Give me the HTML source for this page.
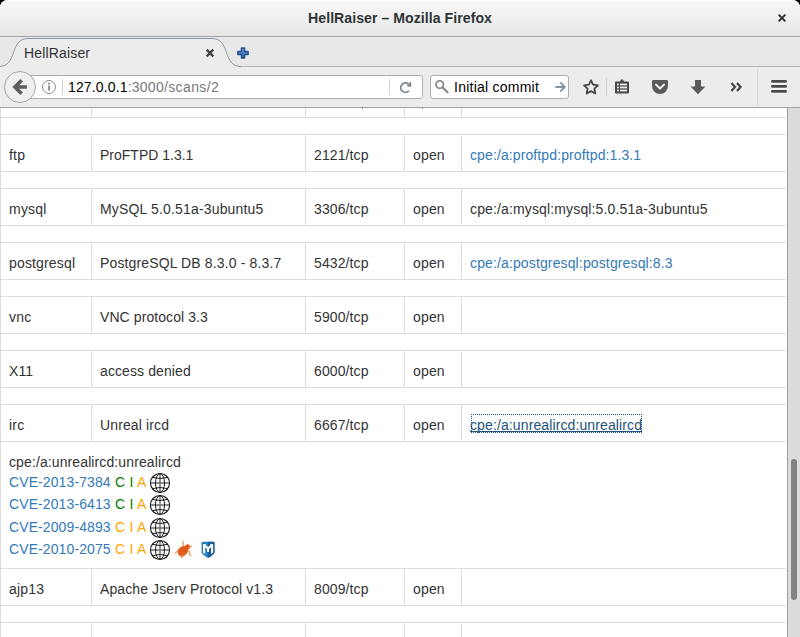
<!DOCTYPE html>
<html>
<head>
<meta charset="utf-8">
<title>HellRaiser</title>
<style>
html,body{margin:0;padding:0;}
body{width:800px;height:637px;overflow:hidden;background:#000;position:relative;font-family:"Liberation Sans",sans-serif;font-size:14px;color:#333;}
.abs{position:absolute;}
#win{position:absolute;left:0;top:0;width:800px;height:637px;overflow:hidden;border-radius:7.5px 7.5px 0 0;background:#fff;}
/* title bar */
#title{position:absolute;left:0;top:0;width:800px;height:36px;background:linear-gradient(#f7f7f7,#f2f2f2 40%,#e7e7e7);border-top:1px solid #fdfdfd;box-sizing:border-box;}
#titleb{position:absolute;left:0;top:36px;width:800px;height:1px;background:#a3a3a3;}
#ttext{position:absolute;left:0;top:8px;width:800px;text-align:center;font-weight:bold;font-size:14.1px;line-height:20px;color:#2e3436;letter-spacing:0.05px;}
/* tab bar */
#tabbar{position:absolute;left:0;top:37px;width:800px;height:30px;background:#e8e8e8;}
#nav{position:absolute;left:0;top:67px;width:800px;height:40px;background:#ececec;}
#navb{position:absolute;left:0;top:107px;width:800px;height:1px;background:#a0a0a0;}
.chrome{font-size:14px;color:#000;white-space:nowrap;line-height:20px;}
/* page */
#page{position:absolute;left:0;top:108px;width:787px;height:529px;background:#fff;overflow:hidden;}
.h{position:absolute;left:0;width:786px;height:1px;background:#ddd;}
.v{position:absolute;width:1px;background:#ddd;}
.t{position:absolute;white-space:nowrap;line-height:20px;font-size:14px;color:#333;}
.l{color:#337ab7;}
.foc{color:#23527c;text-decoration:underline;text-decoration-skip-ink:none;text-underline-offset:1px;text-decoration-thickness:1px;}
.d{letter-spacing:0.1px;word-spacing:0.28px;}
.ic{display:inline-block;}
#sbar{position:absolute;left:787px;top:108px;width:13px;height:529px;background:#dcdcdc;border-left:1px solid #9e9e9e;box-sizing:border-box;}
#thumb{position:absolute;left:791px;top:459px;width:6px;height:141px;border-radius:3px;background:#808386;}
</style>
</head>
<body>
<div id="win">
  <div id="title"></div>
  <div id="ttext">HellRaiser – Mozilla Firefox</div>
  <svg class="abs" style="left:774px;top:10px" width="16" height="16" viewBox="0 0 16 16"><path d="M4.6 4.6 L11.4 11.4 M11.4 4.6 L4.6 11.4" stroke="#2e3436" stroke-width="2" fill="none"/></svg>
  <div id="titleb"></div>

  <div id="tabbar"></div>
  <svg class="abs" style="left:0;top:37px" width="800" height="31" viewBox="0 0 800 31">
    <path d="M-1 29.5 C 18 29.5, 9 1.5, 28 1.5 L 212 1.5 C 231 1.5, 222 29.5, 241 29.5 L 800 29.5 L 800 31 L -3 31 Z" fill="#ececec"/>
    <path d="M238 29.5 L 800 29.5" fill="none" stroke="#b4b4b4" stroke-width="1"/>
    <path d="M-1 29.5 C 18 29.5, 9 1.5, 28 1.5 L 212 1.5 C 231 1.5, 222 29.5, 241 29.5" fill="none" stroke="#8e9aa6" stroke-width="1"/>
  </svg>
  <div class="abs chrome" style="left:24px;top:43px;font-size:14px;letter-spacing:0.16px;color:#333;">HellRaiser</div>
  <svg class="abs" style="left:202px;top:45px" width="16" height="16" viewBox="0 0 16 16"><path d="M4.7 4.7 L11.3 11.3 M11.3 4.7 L4.7 11.3" stroke="#444" stroke-width="2.4" fill="none"/></svg>
  <svg class="abs" style="left:235px;top:45px" width="16" height="16" viewBox="0 0 16 16"><defs><linearGradient id="pg" x1="0" y1="0" x2="0" y2="1"><stop offset="0" stop-color="#6d9cd8"/><stop offset="1" stop-color="#3465a4"/></linearGradient></defs><path d="M6.45 2.90 L9.55 2.90 L9.55 6.45 L13.10 6.45 L13.10 9.55 L9.55 9.55 L9.55 13.10 L6.45 13.10 L6.45 9.55 L2.90 9.55 L2.90 6.45 L6.45 6.45 Z" fill="url(#pg)" stroke="#24508f" stroke-width="1.5" stroke-linejoin="round"/></svg>

  <div id="nav"></div>
  <div class="abs" style="left:242px;top:67px;width:558px;height:1px;background:#f1f1f1;"></div>
  <!-- url bar -->
  <div class="abs" style="left:20px;top:75px;width:403px;height:24px;box-sizing:border-box;border:1px solid #adadad;border-radius:0 3px 3px 0;background:#fff;"></div>
  <div class="abs" style="left:4px;top:71px;width:32px;height:32px;box-sizing:border-box;border:1px solid #a6a6a6;border-radius:50%;background:#efefef;"></div>
  <svg class="abs" style="left:4px;top:71px" width="32" height="32" viewBox="0 0 32 32"><path d="M22.9 16 H12.5 M17.6 9.3 L11 16 L17.6 22.7" stroke="#5e5e5e" stroke-width="3.7" fill="none" stroke-linejoin="miter"/></svg>
  <svg class="abs" style="left:40px;top:78px" width="18" height="18" viewBox="0 0 18 18"><circle cx="9" cy="9" r="6.5" fill="none" stroke="#8e8e8e" stroke-width="1"/><rect x="8.15" y="7.6" width="1.8" height="5" fill="#888"/><rect x="8.15" y="4.9" width="1.8" height="1.7" fill="#888"/></svg>
  <div class="abs" style="left:62px;top:79px;width:1px;height:16px;background:#d0d0d0;"></div>
  <div class="abs chrome" style="left:68px;top:77px;font-size:14px"><span style="color:#000;letter-spacing:0.15px">127.0.0.1</span><span style="color:#777;letter-spacing:0.22px">:3000</span><span style="color:#777;letter-spacing:0.4px">/scans/2</span></div>
  <div class="abs" style="left:389px;top:79px;width:1px;height:16px;background:#d0d0d0;"></div>
  <svg class="abs" style="left:397px;top:79px" width="16" height="16" viewBox="0 0 16 16"><path d="M11.6 5.2 A4.7 4.7 0 1 0 11.9 11.9" stroke="#7c8a98" stroke-width="1.9" fill="none"/><path d="M9.6 7.2 L14.2 2.2 L14.2 8 Z" fill="#7c8a98"/></svg>

  <!-- search -->
  <div class="abs" style="left:430px;top:75px;width:139px;height:24px;box-sizing:border-box;border:1px solid #adadad;border-radius:3px;background:#fff;"></div>
  <svg class="abs" style="left:433px;top:79px" width="16" height="16" viewBox="0 0 16 16"><circle cx="6.7" cy="5.6" r="3.7" fill="none" stroke="#8a8a8a" stroke-width="1.8"/><path d="M9.5 8.4 L14.5 13.3" stroke="#8a8a8a" stroke-width="2.3" stroke-linecap="round"/></svg>
  <div class="abs chrome" style="left:454px;top:77px;letter-spacing:0.24px;">Initial commit</div>
  <svg class="abs" style="left:553px;top:79px" width="16" height="16" viewBox="0 0 16 16"><path d="M2.4 8 H11.4 M7.2 3.4 L11.8 8 L7.2 12.6" stroke="#8494a3" stroke-width="1.8" fill="none"/></svg>

  <!-- toolbar icons -->
  <svg class="abs" style="left:582px;top:78px" width="18" height="18" viewBox="0 0 18 18"><path d="M9.00 2.30 L11.09 6.73 L15.94 7.34 L12.38 10.70 L13.29 15.51 L9.00 13.15 L4.71 15.51 L5.62 10.70 L2.06 7.34 L6.91 6.73 Z" fill="none" stroke="#474747" stroke-width="1.8" stroke-linejoin="round"/></svg>
  <div class="abs" style="left:606px;top:78px;width:1px;height:18px;background:#cfcfcf;"></div>
  <svg class="abs" style="left:614px;top:78px" width="16" height="17" viewBox="0 0 16 17"><path d="M8 1 L10.4 3.4 H14 Q15 3.4 15 4.4 V14.6 Q15 15.6 14 15.6 H2 Q1 15.6 1 14.6 V4.4 Q1 3.4 2 3.4 H5.6 Z" fill="#494949"/><rect x="3" y="5.6" width="1.8" height="1.8" fill="#ececec"/><rect x="6" y="5.6" width="7" height="1.8" fill="#ececec"/><rect x="3" y="8.6" width="1.8" height="1.8" fill="#ececec"/><rect x="6" y="8.6" width="7" height="1.8" fill="#ececec"/><rect x="3" y="11.6" width="1.8" height="1.8" fill="#ececec"/><rect x="6" y="11.6" width="7" height="1.8" fill="#ececec"/></svg>
  <svg class="abs" style="left:651px;top:79px" width="18" height="16" viewBox="0 0 18 16"><path d="M2.4 1 H15.6 Q17 1 17 2.4 V7 A8 8 0 0 1 1 7 V2.4 Q1 1 2.4 1 Z" fill="#5a5a5a"/><path d="M5 5.6 L9 9.4 L13 5.6" stroke="#f4f4f4" stroke-width="2" fill="none" stroke-linecap="round" stroke-linejoin="round"/></svg>
  <svg class="abs" style="left:690px;top:79px" width="16" height="16" viewBox="0 0 16 16"><path d="M5 1 H11 V7.4 H15.4 L8 15.2 L0.6 7.4 H5 Z" fill="#5a5a5a"/></svg>
  <svg class="abs" style="left:730px;top:82px" width="13" height="10" viewBox="0 0 13 10"><path d="M1.4 1 L5 5 L1.4 9 M7 1 L10.6 5 L7 9" stroke="#474747" stroke-width="2.2" fill="none"/></svg>
  <div class="abs" style="left:757px;top:69px;width:1px;height:37px;background:#d6d6d6;"></div>
  <svg class="abs" style="left:770px;top:79px" width="18" height="16" viewBox="0 0 18 16"><g stroke-linecap="round" stroke-width="2.8" fill="none"><path d="M2.4 3.4 H15.6 M2.4 8.4 H15.6 M2.4 13.4 H15.6" stroke="#fafafa"/><path d="M2.4 2.4 H15.6 M2.4 7.4 H15.6 M2.4 12.4 H15.6" stroke="#4a4a4a"/></g></svg>
  <div id="navb"></div>

  <!-- PAGE -->
  <div id="page">
    <!--GEN-->
    <div class="v" style="left:0;top:0;height:529px"></div>
    <div class="h" style="top:9px"></div>
    <div class="h" style="top:26px"></div>
    <div class="h" style="top:63px"></div>
    <div class="h" style="top:80px"></div>
    <div class="h" style="top:117px"></div>
    <div class="h" style="top:134px"></div>
    <div class="h" style="top:171px"></div>
    <div class="h" style="top:188px"></div>
    <div class="h" style="top:225px"></div>
    <div class="h" style="top:242px"></div>
    <div class="h" style="top:279px"></div>
    <div class="h" style="top:296px"></div>
    <div class="h" style="top:333px"></div>
    <div class="h" style="top:460px"></div>
    <div class="h" style="top:497px"></div>
    <div class="h" style="top:514px"></div>
    <div class="v" style="left:91px;top:0px;height:9px"></div>
    <div class="v" style="left:305px;top:0px;height:9px"></div>
    <div class="v" style="left:404px;top:0px;height:9px"></div>
    <div class="v" style="left:461px;top:0px;height:9px"></div>
    <div class="v" style="left:91px;top:27px;height:36px"></div>
    <div class="v" style="left:305px;top:27px;height:36px"></div>
    <div class="v" style="left:404px;top:27px;height:36px"></div>
    <div class="v" style="left:461px;top:27px;height:36px"></div>
    <div class="v" style="left:91px;top:81px;height:36px"></div>
    <div class="v" style="left:305px;top:81px;height:36px"></div>
    <div class="v" style="left:404px;top:81px;height:36px"></div>
    <div class="v" style="left:461px;top:81px;height:36px"></div>
    <div class="v" style="left:91px;top:135px;height:36px"></div>
    <div class="v" style="left:305px;top:135px;height:36px"></div>
    <div class="v" style="left:404px;top:135px;height:36px"></div>
    <div class="v" style="left:461px;top:135px;height:36px"></div>
    <div class="v" style="left:91px;top:189px;height:36px"></div>
    <div class="v" style="left:305px;top:189px;height:36px"></div>
    <div class="v" style="left:404px;top:189px;height:36px"></div>
    <div class="v" style="left:461px;top:189px;height:36px"></div>
    <div class="v" style="left:91px;top:243px;height:36px"></div>
    <div class="v" style="left:305px;top:243px;height:36px"></div>
    <div class="v" style="left:404px;top:243px;height:36px"></div>
    <div class="v" style="left:461px;top:243px;height:36px"></div>
    <div class="v" style="left:91px;top:297px;height:36px"></div>
    <div class="v" style="left:305px;top:297px;height:36px"></div>
    <div class="v" style="left:404px;top:297px;height:36px"></div>
    <div class="v" style="left:461px;top:297px;height:36px"></div>
    <div class="v" style="left:91px;top:461px;height:36px"></div>
    <div class="v" style="left:305px;top:461px;height:36px"></div>
    <div class="v" style="left:404px;top:461px;height:36px"></div>
    <div class="v" style="left:461px;top:461px;height:36px"></div>
    <div class="v" style="left:91px;top:515px;height:14px"></div>
    <div class="v" style="left:305px;top:515px;height:14px"></div>
    <div class="v" style="left:404px;top:515px;height:14px"></div>
    <div class="v" style="left:461px;top:515px;height:14px"></div>
    <div class="t" style="left:9px;top:37px;letter-spacing:0.200px">ftp</div>
    <div class="t" style="left:100px;top:37px">ProFTPD 1.3.1</div>
    <div class="t" style="left:314px;top:37px;letter-spacing:0.107px">2121/tcp</div>
    <div class="t" style="left:413px;top:37px;letter-spacing:0.167px">open</div>
    <div class="t" style="left:470px;top:37px;letter-spacing:0.111px"><span class="l">cpe:/a:proftpd:proftpd:1.3.1</span></div>
    <div class="t" style="left:9px;top:91px;letter-spacing:0.225px">mysql</div>
    <div class="t" style="left:100px;top:91px;letter-spacing:0.167px">MySQL 5.0.51a-3ubuntu5</div>
    <div class="t" style="left:314px;top:91px;letter-spacing:0.107px">3306/tcp</div>
    <div class="t" style="left:413px;top:91px;letter-spacing:0.167px">open</div>
    <div class="t" style="left:470px;top:91px;letter-spacing:0.141px">cpe:/a:mysql:mysql:5.0.51a-3ubuntu5</div>
    <div class="t" style="left:9px;top:145px;letter-spacing:0.156px">postgresql</div>
    <div class="t" style="left:100px;top:145px;letter-spacing:0.135px">PostgreSQL DB 8.3.0 - 8.3.7</div>
    <div class="t" style="left:314px;top:145px;letter-spacing:0.107px">5432/tcp</div>
    <div class="t" style="left:413px;top:145px;letter-spacing:0.167px">open</div>
    <div class="t" style="left:470px;top:145px;letter-spacing:0.132px"><span class="l">cpe:/a:postgresql:postgresql:8.3</span></div>
    <div class="t" style="left:9px;top:199px;letter-spacing:0.250px">vnc</div>
    <div class="t" style="left:100px;top:199px;letter-spacing:0.083px">VNC protocol 3.3</div>
    <div class="t" style="left:314px;top:199px;letter-spacing:0.107px">5900/tcp</div>
    <div class="t" style="left:413px;top:199px;letter-spacing:0.167px">open</div>
    <div class="t" style="left:9px;top:253px;letter-spacing:0.125px">X11</div>
    <div class="t" style="left:100px;top:253px;letter-spacing:0.104px">access denied</div>
    <div class="t" style="left:314px;top:253px;letter-spacing:0.107px">6000/tcp</div>
    <div class="t" style="left:413px;top:253px;letter-spacing:0.167px">open</div>
    <div class="t" style="left:9px;top:307px;letter-spacing:0.200px">irc</div>
    <div class="t" style="left:100px;top:307px;letter-spacing:0.125px">Unreal ircd</div>
    <div class="t" style="left:314px;top:307px;letter-spacing:0.107px">6667/tcp</div>
    <div class="t" style="left:413px;top:307px;letter-spacing:0.167px">open</div>
    <div class="t" style="left:470px;top:307px;letter-spacing:0.115px"><span class="l foc">cpe:/a:unrealircd:unrealircd</span></div>
    <div class="t" style="left:9px;top:471px;letter-spacing:0.188px">ajp13</div>
    <div class="t" style="left:100px;top:471px;letter-spacing:0.104px">Apache Jserv Protocol v1.3</div>
    <div class="t" style="left:314px;top:471px;letter-spacing:0.107px">8009/tcp</div>
    <div class="t" style="left:413px;top:471px;letter-spacing:0.167px">open</div>
    <!--/GEN-->
    <div class="abs" style="left:362px;top:0;width:1px;height:1px;background:#777"></div>
    <div class="abs" style="left:422px;top:0;width:1px;height:1px;background:#777"></div>
    <!--DETAIL-->
    <div class="t" style="left:9px;top:344px;letter-spacing:0.11px">cpe:/a:unrealircd:unrealircd</div>
    <div class="t d" style="left:9px;top:364px"><span class="l">CVE-2013-7384</span> <span style="color:#008000">C</span> <span style="color:#008000">I</span> <span style="color:#ffa500">A</span> <svg class="ic" width="20" height="20" viewBox="0 0 20 20" style="vertical-align:-6px;overflow:visible"><g fill="none" stroke="#1a1a1a"><circle cx="10" cy="10" r="9.55" stroke-width="1.1"/><path d="M10 1 V19 M1 10 H19" stroke="#6c6c6c" stroke-width="1.4"/><ellipse cx="10" cy="10" rx="4.5" ry="9.2" stroke-width="1"/><path d="M2 4.3 Q10 6.7 18 4.3 M2 15.7 Q10 13.3 18 15.7" stroke-width="1"/></g></svg></div>
    <div class="t d" style="left:9px;top:386px"><span class="l">CVE-2013-6413</span> <span style="color:#008000">C</span> <span style="color:#008000">I</span> <span style="color:#ffa500">A</span> <svg class="ic" width="20" height="20" viewBox="0 0 20 20" style="vertical-align:-6px;overflow:visible"><g fill="none" stroke="#1a1a1a"><circle cx="10" cy="10" r="9.55" stroke-width="1.1"/><path d="M10 1 V19 M1 10 H19" stroke="#6c6c6c" stroke-width="1.4"/><ellipse cx="10" cy="10" rx="4.5" ry="9.2" stroke-width="1"/><path d="M2 4.3 Q10 6.7 18 4.3 M2 15.7 Q10 13.3 18 15.7" stroke-width="1"/></g></svg></div>
    <div class="t d" style="left:9px;top:409px"><span class="l">CVE-2009-4893</span> <span style="color:#ffa500">C</span> <span style="color:#ffa500">I</span> <span style="color:#ffa500">A</span> <svg class="ic" width="20" height="20" viewBox="0 0 20 20" style="vertical-align:-6px;overflow:visible"><g fill="none" stroke="#1a1a1a"><circle cx="10" cy="10" r="9.55" stroke-width="1.1"/><path d="M10 1 V19 M1 10 H19" stroke="#6c6c6c" stroke-width="1.4"/><ellipse cx="10" cy="10" rx="4.5" ry="9.2" stroke-width="1"/><path d="M2 4.3 Q10 6.7 18 4.3 M2 15.7 Q10 13.3 18 15.7" stroke-width="1"/></g></svg></div>
    <div class="t d" style="left:9px;top:431px"><span class="l">CVE-2010-2075</span> <span style="color:#ffa500">C</span> <span style="color:#ffa500">I</span> <span style="color:#ffa500">A</span> <svg class="ic" width="20" height="20" viewBox="0 0 20 20" style="vertical-align:-6px;overflow:visible"><g fill="none" stroke="#1a1a1a"><circle cx="10" cy="10" r="9.55" stroke-width="1.1"/><path d="M10 1 V19 M1 10 H19" stroke="#6c6c6c" stroke-width="1.4"/><ellipse cx="10" cy="10" rx="4.5" ry="9.2" stroke-width="1"/><path d="M2 4.3 Q10 6.7 18 4.3 M2 15.7 Q10 13.3 18 15.7" stroke-width="1"/></g></svg></div>
    <svg class="abs" style="left:172px;top:430px" width="24" height="24" viewBox="0 0 24 24"><g transform="rotate(47 11.6 12.5)"><ellipse cx="11.6" cy="13.4" rx="4.5" ry="5.7" fill="#e05a1c"/><ellipse cx="11.6" cy="7.2" rx="2.6" ry="2.6" fill="#e05a1c"/></g><g stroke="#e8743a" stroke-width="1.5" fill="none" stroke-linecap="round" opacity="0.7"><path d="M11.3 7.2 L10.9 3.4"/><path d="M7.8 10.4 L3.4 15.2"/><path d="M16.4 9.9 L19.4 8.2"/><path d="M16.8 12.4 L18.3 17.8"/><path d="M13.4 15.6 L9.6 19.6"/><path d="M12 14.6 L8.6 18.4" opacity="0.6"/></g></svg>
    <svg class="abs" style="left:196px;top:430px" width="24" height="24" viewBox="0 0 24 24"><path d="M5.6 4.7 Q5.6 3.9 6.5 3.8 H17.6 Q18.5 3.9 18.5 4.7 V14.4 Q17.6 16.8 12.06 20.1 Q6.5 16.8 5.6 14.4 Z" fill="#217fc4"/><path d="M12.06 3.8 H17.6 Q18.5 3.9 18.5 4.7 V14.4 Q17.6 16.8 12.06 20.1 Z" fill="#1b5e9b"/><path d="M7 6 H9.2 L12.06 9.3 L14.9 6 H17.1 V14.6 L15.1 16 V9 L13 11.2 V13.9 H11.1 V11.2 L9.2 9 V16 L7 14.6 Z" fill="#fff"/></svg>
    <div class="abs" style="left:471px;top:306px;width:171px;height:19px;box-sizing:border-box;border:1px dotted #23527c"></div>
    <!--/DETAIL-->
  </div>
  <div id="sbar"></div>
  <div id="thumb"></div>
</div>
</body>
</html>
